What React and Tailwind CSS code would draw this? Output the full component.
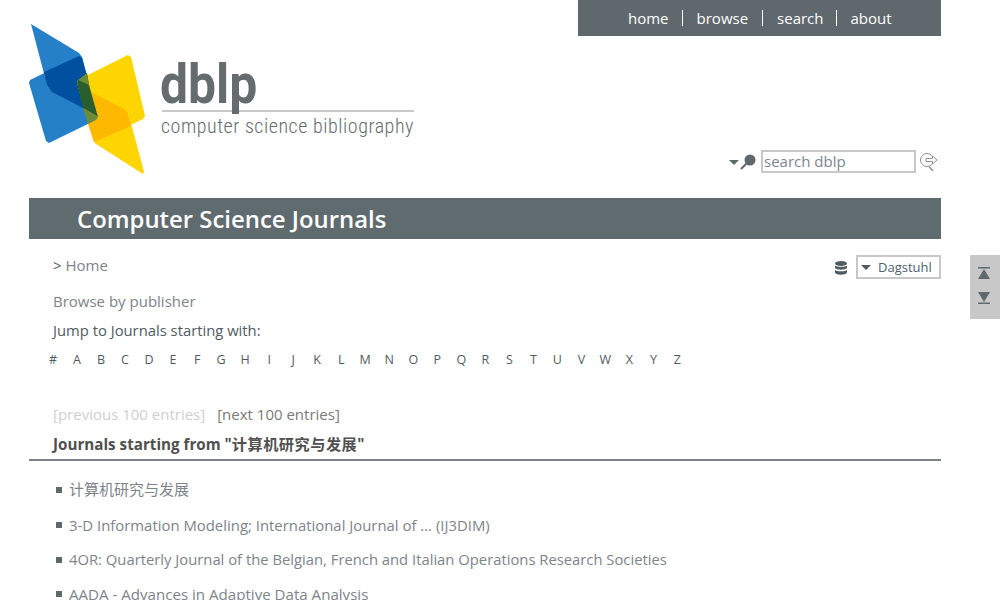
const font = 'font-["Open_Sans","Noto_Sans_CJK_SC",sans-serif]';
const letters = ['#', 'A', 'B', 'C', 'D', 'E', 'F', 'G', 'H', 'I', 'J', 'K', 'L', 'M', 'N', 'O', 'P', 'Q', 'R', 'S', 'T', 'U', 'V', 'W', 'X', 'Y', 'Z'];
const journals = [
  { name: '计算机研究与发展', cls: 'h-[37px] text-[15px]' },
  { name: '3-D Information Modeling; International Journal of ... (IJ3DIM)', cls: 'h-[34px] text-[14.900px]' },
  { name: '4OR: Quarterly Journal of the Belgian, French and Italian Operations Research Societies', cls: 'h-[35px] text-[14.800px]' },
  { name: 'AADA - Advances in Adaptive Data Analysis', cls: 'h-[34px] text-[15.100px]' },
];

function Logo() {
  return (
    <svg width="120" height="154" viewBox="29 22 120 154" className="shrink-0">
      <polygon points="31,24 79,53 82,57 98,117 96,120 52,92 47,85" fill="#2680c8" />
      <polygon points="30,80 79,56 82,58 98,117 96,120 49,143 46,141 29,83" fill="#2680c8" />
      <polygon points="44,72 79,56 82,58 98,117 96,120 83,108 52,92 47,85" fill="#0050a0" />
      <polygon points="128,55 131,57 145,116 143,119 97,141 94,142 77,83 78,80" fill="#ffd500" />
      <polygon points="78,80 126,108 128,112 144,172 143,174 96,144 94,142 77,83" fill="#ffd500" />
      <polygon points="91,92 124,109 127,112 131,126 94,142 88,124 98,117" fill="#fdb900" />
      <polygon points="78,80 87,73 89,85 98,117 83,108 77,83" fill="#2a5e2c" />
      <polygon points="78,80 87,73 89,85" fill="#6b8a3a" />
      <polygon points="83,108 98,117 96,120 88,124" fill="#6b8a3a" />
    </svg>
  );
}

function SearchRow() {
  return (
    <div className="flex items-center">
      <svg width="10" height="6" viewBox="0 0 10 6" className="mt-[3px]"><polygon points="0,0 10,0 5,5" fill="#5f686c" /></svg>
      <svg width="18" height="18" viewBox="0 0 18 18" className="mr-[4px]">
        <circle cx="11" cy="7" r="5.5" fill="#5f686c" />
        <line x1="2" y1="16" x2="8" y2="10" stroke="#5f686c" strokeWidth="2" />
      </svg>
      <div className="w-[155px] h-[23px] border-2 border-[#c8c8c8] pl-[1px] text-[15px] leading-[19px] text-[#7d878d]">search dblp</div>
      <svg width="18" height="18" viewBox="0 0 18 18" className="ml-[4px] mr-[3px]" fill="none" stroke="#8a9296" strokeWidth="1">
        <circle cx="7" cy="7" r="6.500" />
        <line x1="9" y1="13.500" x2="13" y2="18" strokeWidth="1.500" />
        <path d="M6 5.500h6.500V3l4.500 4-4.500 4V8.500H6z" fill="#fff" />
      </svg>
    </div>
  );
}

function ScrollButtons() {
  return (
    <div className="fixed right-0 top-[255px] w-[30px] h-[64px] bg-[#c8c8c8] flex flex-col items-center pt-[12px] pr-[2px] gap-[13px]">
      <svg width="12" height="12" viewBox="0 0 12 12">
        <rect x="0" y="0" width="12" height="1.500" fill="#5f686c" />
        <polygon points="6,2 12,12 0,12" fill="#5f686c" />
      </svg>
      <svg width="12" height="12" viewBox="0 0 12 12">
        <polygon points="0,0 12,0 6,10" fill="#5f686c" />
        <rect x="0" y="10.500" width="12" height="1.500" fill="#5f686c" />
      </svg>
    </div>
  );
}

export default function App() {
  return (
    <div className={`h-screen overflow-hidden bg-white ${font}`}>
      <div className="w-[912px] ml-[29px]">
        {/* header */}
        <div className="h-[198px] flex justify-between items-start">
          <div className="flex mt-[22px]">
            <Logo />
            <div className="ml-[13px] w-[252px]">
              <div className="relative z-10 h-[88px] pt-[37px] text-[56px] leading-[50px] font-bold text-[#656c6e] font-['Roboto'] -ml-[2px] origin-left scale-x-[0.89] whitespace-nowrap">dblp</div>
              <div className="w-[252px] h-[2px] bg-[#c8c8c8]" />
              <div className="-ml-[1px] pt-[1px] text-[20px] leading-[26px] font-light text-[#656c6e] font-['Roboto'] [font-stretch:condensed] tracking-[0.54px] whitespace-nowrap">computer science bibliography</div>
            </div>
          </div>
          <div className="h-[173px] flex flex-col items-end justify-between">
            <nav className="w-[363px] h-[36px] bg-[#5f686c] flex items-center pl-[50px] text-[15px] text-white">
              <span>home</span>
              <span className="ml-[13px] mr-[14px] w-px h-[16px] bg-white" />
              <span>browse</span>
              <span className="mx-[14px] w-px h-[16px] bg-white" />
              <span>search</span>
              <span className="ml-[12px] mr-[14px] w-px h-[16px] bg-white" />
              <span>about</span>
            </nav>
            <SearchRow />
          </div>
        </div>

        {/* title bar */}
        <h1 className="h-[41px] bg-[#606b6f] pl-[48px] text-[23.900px] leading-[42px] font-semibold text-white">Computer Science Journals</h1>

        {/* breadcrumb + publisher select */}
        <div className="flex justify-between items-start pl-[24px] pt-[16px] h-[52px]">
          <div className="text-[15px] leading-[21px] text-[#7d848a]"><span className="text-[#505b62]">&gt;</span> Home</div>
          <div className="flex items-center">
            <svg width="12" height="14" viewBox="0 0 12 14" className="mt-[2px] mr-[9px]" fill="#505b62">
              <ellipse cx="6" cy="2.500" rx="6" ry="2.500" />
              <path d="M0 4.500c1 1.700 11 1.700 12 0v2.500c-1 2.300-11 2.300-12 0z" />
              <path d="M0 9c1 1.700 11 1.700 12 0v2.500c-1 3-11 3-12 0z" />
            </svg>
            <div className="w-[85px] h-[24px] border-2 border-[#c8c8c8] flex items-center pl-[3px] pt-[1px] text-[13px] text-[#505f6b]">
              <svg width="10" height="6" viewBox="0 0 10 6" className="mr-[7px]"><polygon points="0,0 10,0 5,5" fill="#505b62" /></svg>
              Dagstuhl
            </div>
          </div>
        </div>

        {/* browse */}
        <div className="pl-[24px]">
          <div className="text-[15px] leading-[21px] text-[#7d848a]">Browse by publisher</div>
          <div className="mt-[8px] text-[14.800px] leading-[21px] text-[#505b62]">Jump to Journals starting with:</div>
          <div className="flex -ml-[12px] mt-[10px] text-[12.500px] leading-[18px] text-[#505b62]">
            {letters.map((l) => (
              <span key={l} className="w-[24.020px] text-center shrink-0">{l}</span>
            ))}
          </div>
          <div className="mt-[35px] text-[15px] leading-[21px] whitespace-pre">
            <span className="text-[#d0d0d0]">[previous 100 entries]</span>
            <span className="ml-[12px] text-[#7a7a7a]">[next 100 entries]</span>
          </div>
          <h2 className="mt-[9px] text-[15.200px] leading-[21px] font-bold text-[#505050]">Journals starting from "<span className="tracking-[0.5px]">计算机研究与发展</span>"</h2>
        </div>
        <div className="mt-[4px] h-[2px] bg-[#7d8284]" />

        {/* journal list */}
        <ul className="pl-[27px] pt-[10px]">
          {journals.map((j) => (
            <li key={j.name} className={`${j.cls} flex items-center text-[#7d848a] whitespace-nowrap`}>
              <span className="w-[6px] h-[6px] bg-[#5f686c] mr-[7px] shrink-0" />
              {j.name}
            </li>
          ))}
        </ul>
      </div>
      <ScrollButtons />
    </div>
  );
}
